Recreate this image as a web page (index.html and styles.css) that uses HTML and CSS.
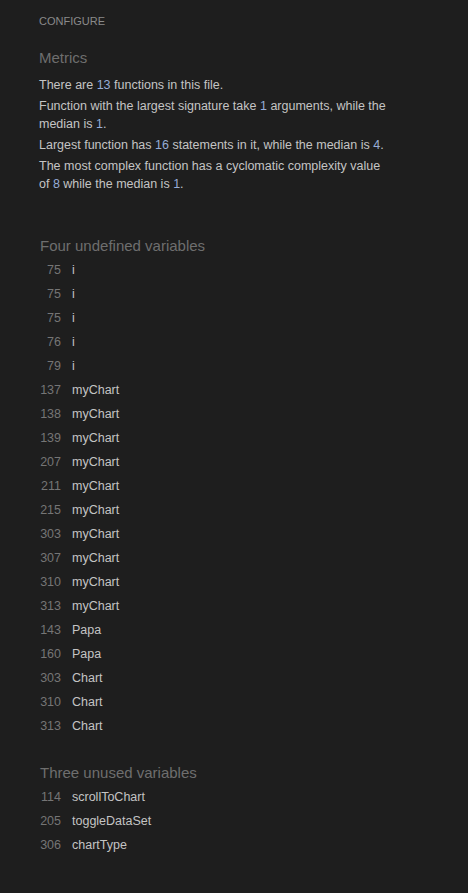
FILE: index.html
```html
<!DOCTYPE html>
<html>
<head>
<meta charset="utf-8">
<link rel="stylesheet" href="styles.css">
</head>
<body>
<div class="page">
  <div class="configure">CONFIGURE</div>
  <section class="metrics">
    <h2 class="title">Metrics</h2>
    <p>There are <span class="num">13</span> functions in this file.</p>
    <p>Function with the largest signature take <span class="num">1</span> arguments, while the median is <span class="num">1</span>.</p>
    <p>Largest function has <span class="num">16</span> statements in it, while the median is <span class="num">4</span>.</p>
    <p>The most complex function has a cyclomatic complexity value of <span class="num">8</span> while the median is <span class="num">1</span>.</p>
  </section>
  <section class="vars">
    <h2 class="title vtitle">Four undefined variables</h2>
    <div class="list">
      <div class="row"><span class="ln">75</span><span class="name">i</span></div>
      <div class="row"><span class="ln">75</span><span class="name">i</span></div>
      <div class="row"><span class="ln">75</span><span class="name">i</span></div>
      <div class="row"><span class="ln">76</span><span class="name">i</span></div>
      <div class="row"><span class="ln">79</span><span class="name">i</span></div>
      <div class="row"><span class="ln">137</span><span class="name">myChart</span></div>
      <div class="row"><span class="ln">138</span><span class="name">myChart</span></div>
      <div class="row"><span class="ln">139</span><span class="name">myChart</span></div>
      <div class="row"><span class="ln">207</span><span class="name">myChart</span></div>
      <div class="row"><span class="ln">211</span><span class="name">myChart</span></div>
      <div class="row"><span class="ln">215</span><span class="name">myChart</span></div>
      <div class="row"><span class="ln">303</span><span class="name">myChart</span></div>
      <div class="row"><span class="ln">307</span><span class="name">myChart</span></div>
      <div class="row"><span class="ln">310</span><span class="name">myChart</span></div>
      <div class="row"><span class="ln">313</span><span class="name">myChart</span></div>
      <div class="row"><span class="ln">143</span><span class="name">Papa</span></div>
      <div class="row"><span class="ln">160</span><span class="name">Papa</span></div>
      <div class="row"><span class="ln">303</span><span class="name">Chart</span></div>
      <div class="row"><span class="ln">310</span><span class="name">Chart</span></div>
      <div class="row"><span class="ln">313</span><span class="name">Chart</span></div>
    </div>
  </section>
  <section class="vars unused">
    <h2 class="title vtitle">Three unused variables</h2>
    <div class="list">
      <div class="row"><span class="ln">114</span><span class="name">scrollToChart</span></div>
      <div class="row"><span class="ln">205</span><span class="name">toggleDataSet</span></div>
      <div class="row"><span class="ln">306</span><span class="name">chartType</span></div>
    </div>
  </section>
</div>
</body>
</html>
```

FILE: styles.css
```css
html, body {
  margin: 0;
  padding: 0;
  background: #1e1e1e;
}
body {
  font-family: "Liberation Sans", Arial, sans-serif;
  color: #c4c4c4;
  height: 893px;
  overflow: hidden;
}
.page {
  padding: 14px 0 0 39px;
  width: 350px;
}
.configure {
  font-size: 11px;
  line-height: 14px;
  color: #8a8a8a;
}
.title {
  font-weight: normal;
  font-size: 15px;
  line-height: 18px;
  color: #6e6e6e;
  margin: 0;
}
.metrics .title {
  margin-top: 21px;
  margin-bottom: 9px;
}
.metrics p {
  margin: 0 0 3px 0;
  font-size: 12.5px;
  line-height: 18px;
}
.num {
  color: #96acd6;
}
.vars {
  margin-top: 44px;
}
.vtitle {
  margin-left: 1px;
  margin-bottom: 3px;
}
.list {
  display: flex;
  flex-direction: column;
}
.row {
  display: flex;
  height: 24px;
  align-items: center;
  font-size: 12.5px;
  gap: 11px;
}
.ln {
  width: 22px;
  text-align: right;
  color: #757575;
}
.name {
  color: #c4c4c4;
}
.unused {
  margin-top: 26px;
}
```
